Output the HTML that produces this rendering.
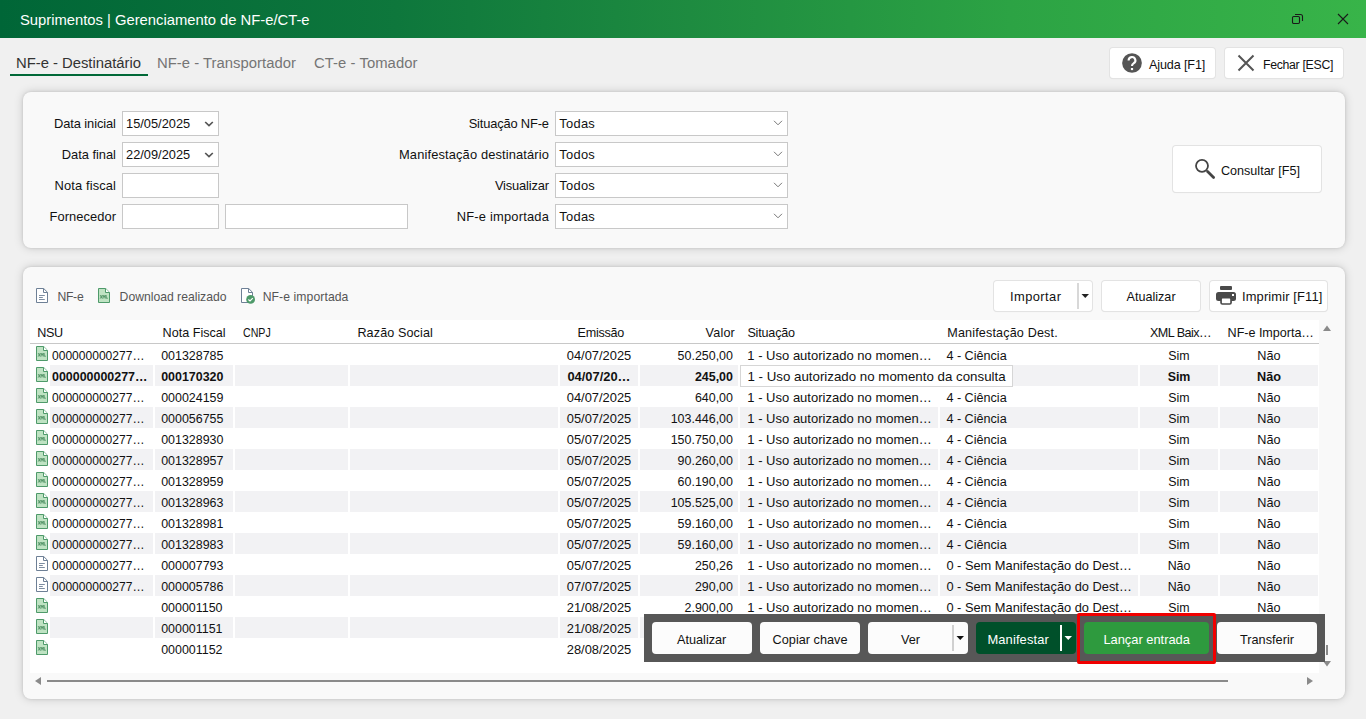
<!DOCTYPE html><html><head><meta charset="utf-8"><style>
*{margin:0;padding:0;box-sizing:border-box}
html,body{width:1366px;height:719px;overflow:hidden;background:#F0F0F0;font-family:"Liberation Sans",sans-serif;color:#111}
.a{position:absolute}
.t{position:absolute;white-space:nowrap;line-height:1}
.panel{position:absolute;background:#F9F9F9;border-radius:8px;box-shadow:0 0 10px rgba(0,0,0,0.17),0 0 3px rgba(0,0,0,0.12)}
.btn{position:absolute;background:#FFFFFF;border-radius:3px;box-shadow:0 0 0 1px #E3E3E3,0 1px 1px rgba(0,0,0,0.08)}
.inp{position:absolute;background:#FFF;border:1px solid #C8C8C8}
.c{position:absolute;height:21px;background:#F2F2F4}
.bb{position:absolute;background:#FCFCFC;border-radius:4px}
</style></head><body>
<div class="a" style="left:0;top:0;width:1366px;height:38px;background:linear-gradient(to right,#006637 0%,#0E773C 29%,#1E8B40 50.5%,#2CA344 74%,#38B449 100%)"></div>
<div class="t" style="left:20.00px;top:13px;font-size:14.8px;letter-spacing:-0.013px;color:#fff">Suprimentos | Gerenciamento de NF-e/CT-e</div>
<svg class="a" style="left:1290px;top:12px" width="16" height="16" viewBox="0 0 16 16"><rect x="2.5" y="4.5" width="7" height="7" rx="1.2" fill="none" stroke="#1a1a1a" stroke-width="1.1"/><path d="M5 2.5 H10.5 Q12.5 2.5 12.5 4.5 V9" fill="none" stroke="#1a1a1a" stroke-width="1.1"/></svg>
<svg class="a" style="left:1337px;top:13px" width="12" height="12" viewBox="0 0 12 12"><path d="M1 1 L11 11 M11 1 L1 11" stroke="#1a1a1a" stroke-width="1.1"/></svg>
<div class="t" style="left:16.00px;top:56px;font-size:14.85px;letter-spacing:-0.024px;color:#333333">NF-e - Destinatário</div>
<div class="a" style="left:10px;top:74px;width:138px;height:2px;background:#006837"></div>
<div class="t" style="left:157.00px;top:56px;font-size:14.85px;letter-spacing:0.018px;color:#757575">NF-e - Transportador</div>
<div class="t" style="left:314.00px;top:56px;font-size:14.85px;letter-spacing:0.047px;color:#757575">CT-e - Tomador</div>
<div class="btn" style="left:1110px;top:48px;width:105px;height:30px"></div>
<svg class="a" style="left:1122px;top:53px" width="20" height="20" viewBox="0 0 20 20"><circle cx="10" cy="10" r="9.85" fill="#555"/><path d="M6.6 7.4 A3.4 3.3 0 1 1 11.6 10.3 Q10 11.2 10 13" fill="none" stroke="#fff" stroke-width="2.1"/><rect x="8.9" y="15" width="2.2" height="2.1" fill="#fff"/></svg>
<div class="t" style="left:1149.00px;top:59px;font-size:12.6px;letter-spacing:-0.126px">Ajuda [F1]</div>
<div class="btn" style="left:1225px;top:48px;width:118px;height:30px"></div>
<svg class="a" style="left:1237px;top:54px" width="18" height="18" viewBox="0 0 18 18"><path d="M1.5 1.5 L16.5 16.5 M16.5 1.5 L1.5 16.5" stroke="#555" stroke-width="2"/></svg>
<div class="t" style="left:1263.00px;top:59px;font-size:12.3px;letter-spacing:-0.311px">Fechar [ESC]</div>
<div class="panel" style="left:23px;top:92px;width:1322px;height:156px"></div>
<div class="t" style="left:54.00px;top:118px;font-size:12.9px;letter-spacing:-0.100px">Data inicial</div>
<div class="t" style="left:468.70px;top:118px;font-size:12.9px;letter-spacing:-0.180px">Situação NF-e</div>
<div class="inp" style="left:122px;top:111px;width:97px;height:25px"></div>
<div class="inp" style="left:555px;top:111px;width:233px;height:25px"></div>
<div class="t" style="left:559.30px;top:118px;font-size:12.9px;letter-spacing:0.269px">Todas</div>
<svg class="a" style="left:773px;top:120px" width="10" height="6" viewBox="0 0 10 6"><path d="M1 0.8 L5 4.8 L9 0.8" fill="none" stroke="#777" stroke-width="1"/></svg>
<div class="t" style="left:61.80px;top:149px;font-size:12.9px;letter-spacing:-0.033px">Data final</div>
<div class="t" style="left:399.00px;top:149px;font-size:12.9px;letter-spacing:0.125px">Manifestação destinatário</div>
<div class="inp" style="left:122px;top:142px;width:97px;height:25px"></div>
<div class="inp" style="left:555px;top:142px;width:233px;height:25px"></div>
<div class="t" style="left:559.30px;top:149px;font-size:12.9px;letter-spacing:0.269px">Todos</div>
<svg class="a" style="left:773px;top:151px" width="10" height="6" viewBox="0 0 10 6"><path d="M1 0.8 L5 4.8 L9 0.8" fill="none" stroke="#777" stroke-width="1"/></svg>
<div class="t" style="left:54.50px;top:180px;font-size:12.9px;letter-spacing:0.128px">Nota fiscal</div>
<div class="t" style="left:494.90px;top:180px;font-size:12.9px;letter-spacing:-0.177px">Visualizar</div>
<div class="inp" style="left:122px;top:173px;width:97px;height:25px"></div>
<div class="inp" style="left:555px;top:173px;width:233px;height:25px"></div>
<div class="t" style="left:559.30px;top:180px;font-size:12.9px;letter-spacing:0.269px">Todos</div>
<svg class="a" style="left:773px;top:182px" width="10" height="6" viewBox="0 0 10 6"><path d="M1 0.8 L5 4.8 L9 0.8" fill="none" stroke="#777" stroke-width="1"/></svg>
<div class="t" style="left:49.50px;top:211px;font-size:12.9px;letter-spacing:0.059px">Fornecedor</div>
<div class="t" style="left:456.70px;top:211px;font-size:12.9px;letter-spacing:0.206px">NF-e importada</div>
<div class="inp" style="left:122px;top:204px;width:97px;height:25px"></div>
<div class="inp" style="left:555px;top:204px;width:233px;height:25px"></div>
<div class="t" style="left:559.30px;top:211px;font-size:12.9px;letter-spacing:0.269px">Todas</div>
<svg class="a" style="left:773px;top:213px" width="10" height="6" viewBox="0 0 10 6"><path d="M1 0.8 L5 4.8 L9 0.8" fill="none" stroke="#777" stroke-width="1"/></svg>
<div class="t" style="left:126.00px;top:118px;font-size:12.8px;letter-spacing:0.015px">15/05/2025</div>
<svg class="a" style="left:204px;top:121px" width="10" height="6" viewBox="0 0 10 6"><path d="M1.2 1 L5 4.6 L8.8 1" fill="none" stroke="#555" stroke-width="1.7"/></svg>
<div class="t" style="left:126.00px;top:149px;font-size:12.8px;letter-spacing:0.015px">22/09/2025</div>
<svg class="a" style="left:204px;top:152px" width="10" height="6" viewBox="0 0 10 6"><path d="M1.2 1 L5 4.6 L8.8 1" fill="none" stroke="#555" stroke-width="1.7"/></svg>
<div class="inp" style="left:225px;top:204px;width:183px;height:25px"></div>
<div class="btn" style="left:1173px;top:146px;width:148px;height:46px"></div>
<svg class="a" style="left:1193px;top:157px" width="24" height="24" viewBox="0 0 24 24"><circle cx="9" cy="8.8" r="6" fill="none" stroke="#444" stroke-width="1.8"/><path d="M14.6 14.6 L20.6 20.6" stroke="#444" stroke-width="2.8" stroke-linecap="round"/></svg>
<div class="t" style="left:1221.00px;top:165px;font-size:12.6px;letter-spacing:-0.010px">Consultar [F5]</div>
<div class="panel" style="left:23px;top:267px;width:1322px;height:432px"></div>
<svg class="a" style="left:36px;top:288px" width="12" height="15" viewBox="0 0 12 15"><path d="M0.5 0.5 H7.7 L11.5 4.3 V14.5 H0.5 Z" fill="#fff" stroke="#6E8096" stroke-width="1"/><path d="M7.5 0.5 V4.5 H11.5" fill="none" stroke="#6E8096" stroke-width="1"/><path d="M3 7.5 H8.8 M3 9.5 H6.8 M3 11.5 H8.8" stroke="#6E8096" stroke-width="0.9"/></svg>
<div class="t" style="left:57.40px;top:291px;font-size:12.2px;letter-spacing:-0.271px;color:#555">NF-e</div>
<svg class="a" style="left:98px;top:288px" width="12" height="15" viewBox="0 0 12 15"><path d="M0.5 0.5 H7.7 L11.5 4.3 V14.5 H0.5 Z" fill="#BFE3C3" stroke="#4E9A6A" stroke-width="1"/><path d="M7.5 0.5 V4.5 H11.5" fill="#fff" stroke="#4E9A6A" stroke-width="1"/><path d="M2.2 7.1 L4.2 10.6 M4.2 7.1 L2.2 10.6 M5 10.6 V7.1 L6.1 9.4 L7.2 7.1 V10.6 M8.2 7.1 V10.2 H9.9" fill="none" stroke="#4A8E60" stroke-width="0.85"/></svg>
<div class="t" style="left:119.60px;top:291px;font-size:12.2px;letter-spacing:-0.009px;color:#555">Download realizado</div>
<svg class="a" style="left:241px;top:288px" width="16" height="16" viewBox="0 0 16 16"><path d="M0.5 0.5 H7.7 L11.5 4.3 V14.5 H0.5 Z" fill="#fff" stroke="#6E8096" stroke-width="1"/><path d="M7.5 0.5 V4.5 H11.5" fill="none" stroke="#6E8096" stroke-width="1"/><circle cx="9.6" cy="11.4" r="4.4" fill="#4E9A6A"/><path d="M7.4 11.5 L9 12.9 L11.8 10.1" fill="none" stroke="#fff" stroke-width="1.2"/></svg>
<div class="t" style="left:262.70px;top:291px;font-size:12.2px;letter-spacing:0.080px;color:#555">NF-e importada</div>
<div class="btn" style="left:994px;top:281px;width:98px;height:30px"></div>
<div class="t" style="left:1010.00px;top:291px;font-size:12.9px;letter-spacing:0.424px">Importar</div>
<div class="a" style="left:1077px;top:283px;width:2px;height:26px;background:#D8D8D8"></div>
<svg class="a" style="left:1081px;top:293px" width="9" height="6" viewBox="0 0 9 6"><path d="M0.5 1 H8 L4.25 5 Z" fill="#222"/></svg>
<div class="btn" style="left:1102px;top:281px;width:98px;height:30px"></div>
<div class="t" style="left:1126.50px;top:291px;font-size:12.6px;letter-spacing:0.010px">Atualizar</div>
<div class="btn" style="left:1210px;top:281px;width:117px;height:30px"></div>
<svg class="a" style="left:1215px;top:285px" width="22" height="21" viewBox="0 0 22 21"><rect x="5" y="1" width="12" height="4" rx="1" fill="#4a4a4a"/><rect x="1" y="7" width="20" height="9" rx="2.5" fill="#4a4a4a"/><rect x="6.05" y="12.6" width="10" height="6.4" rx="1.3" fill="#fff" stroke="#4a4a4a" stroke-width="1.7"/><rect x="17" y="9" width="2" height="2" fill="#fff"/></svg>
<div class="t" style="left:1242.00px;top:291px;font-size:12.9px;letter-spacing:0.139px">Imprimir [F11]</div>
<div class="a" style="left:30px;top:320px;width:1289px;height:353px;background:#fff"></div>
<div class="a" style="left:30px;top:343px;width:1289px;height:1px;background:#C8C8C8"></div>
<div class="t" style="left:37.30px;top:327px;font-size:12.6px;letter-spacing:-0.402px">NSU</div>
<div class="t" style="left:162.60px;top:327px;font-size:12.6px;letter-spacing:-0.002px">Nota Fiscal</div>
<div class="t" style="left:242.90px;top:327px;font-size:12.6px;transform:scaleX(0.8449);transform-origin:0 0">CNPJ</div>
<div class="t" style="left:357.40px;top:327px;font-size:12.6px;letter-spacing:0.114px">Razão Social</div>
<div class="t" style="left:577.60px;top:327px;font-size:12.6px;letter-spacing:-0.253px">Emissão</div>
<div class="t" style="left:705.50px;top:327px;font-size:12.6px;letter-spacing:0.205px">Valor</div>
<div class="t" style="left:747.40px;top:327px;font-size:12.6px;letter-spacing:-0.191px">Situação</div>
<div class="t" style="left:947.30px;top:327px;font-size:12.6px;letter-spacing:0.150px">Manifestação Dest.</div>
<div class="t" style="left:1150.00px;top:327px;font-size:12.6px;letter-spacing:-0.544px">XML Baix…</div>
<div class="t" style="left:1227.60px;top:327px;font-size:12.6px;letter-spacing:-0.035px">NF-e Importa…</div>
<svg class="a" style="left:1322px;top:324px" width="10" height="8" viewBox="0 0 10 8"><path d="M1 7 H9 L5 1.5 Z" fill="#8a8a8a"/></svg>
<svg class="a" style="left:36px;top:346px" width="12" height="15" viewBox="0 0 12 15"><path d="M0.5 0.5 H7.7 L11.5 4.3 V14.5 H0.5 Z" fill="#BFE3C3" stroke="#4E9A6A" stroke-width="1"/><path d="M7.5 0.5 V4.5 H11.5" fill="#fff" stroke="#4E9A6A" stroke-width="1"/><path d="M2.2 7.1 L4.2 10.6 M4.2 7.1 L2.2 10.6 M5 10.6 V7.1 L6.1 9.4 L7.2 7.1 V10.6 M8.2 7.1 V10.2 H9.9" fill="none" stroke="#4A8E60" stroke-width="0.85"/></svg>
<div class="t" style="left:52.00px;top:350px;font-size:12.05px">000000000277…</div>
<div class="t" style="left:161.20px;top:350px;font-size:12.45px">001328785</div>
<div class="t" style="left:566.72px;top:350px;font-size:12.9px">04/07/2025</div>
<div class="t" style="left:677.61px;top:350px;font-size:12.45px">50.250,00</div>
<div class="t" style="left:747.30px;top:349px;font-size:13.0px;letter-spacing:0.009px">1 - Uso autorizado no momen…</div>
<div class="t" style="left:946.40px;top:350px;font-size:12.62px;letter-spacing:-0.002px">4 - Ciência</div>
<div class="t" style="left:1168.32px;top:350px;font-size:12.4px">Sim</div>
<div class="t" style="left:1257.35px;top:350px;font-size:12.7px">Não</div>
<div class="c" style="left:50px;top:365px;width:103px"></div>
<div class="c" style="left:155px;top:365px;width:78px"></div>
<div class="c" style="left:235px;top:365px;width:113px"></div>
<div class="c" style="left:350px;top:365px;width:208px"></div>
<div class="c" style="left:560px;top:365px;width:78px"></div>
<div class="c" style="left:640px;top:365px;width:98px"></div>
<div class="c" style="left:740px;top:365px;width:198px"></div>
<div class="c" style="left:940px;top:365px;width:198px"></div>
<div class="c" style="left:1140px;top:365px;width:78px"></div>
<div class="c" style="left:1220px;top:365px;width:98px"></div>
<svg class="a" style="left:36px;top:367px" width="12" height="15" viewBox="0 0 12 15"><path d="M0.5 0.5 H7.7 L11.5 4.3 V14.5 H0.5 Z" fill="#BFE3C3" stroke="#4E9A6A" stroke-width="1"/><path d="M7.5 0.5 V4.5 H11.5" fill="#fff" stroke="#4E9A6A" stroke-width="1"/><path d="M2.2 7.1 L4.2 10.6 M4.2 7.1 L2.2 10.6 M5 10.6 V7.1 L6.1 9.4 L7.2 7.1 V10.6 M8.2 7.1 V10.2 H9.9" fill="none" stroke="#4A8E60" stroke-width="0.85"/></svg>
<div class="t" style="left:52.00px;top:371px;font-size:12.45px;font-weight:bold">000000000277…</div>
<div class="t" style="left:161.20px;top:371px;font-size:12.45px;font-weight:bold">000170320</div>
<div class="t" style="left:567.44px;top:371px;font-size:12.9px;font-weight:bold">04/07/20…</div>
<div class="t" style="left:694.92px;top:371px;font-size:12.45px;font-weight:bold">245,00</div>
<div class="a" style="left:740px;top:365px;width:273px;height:22px;background:#fff;border:1px solid #D6D6D6"></div>
<div class="t" style="left:747.40px;top:370px;font-size:13.3px;letter-spacing:0.007px">1 - Uso autorizado no momento da consulta</div>
<div class="t" style="left:1167.63px;top:371px;font-size:12.4px;font-weight:bold">Sim</div>
<div class="t" style="left:1257.00px;top:371px;font-size:12.7px;font-weight:bold">Não</div>
<svg class="a" style="left:36px;top:388px" width="12" height="15" viewBox="0 0 12 15"><path d="M0.5 0.5 H7.7 L11.5 4.3 V14.5 H0.5 Z" fill="#BFE3C3" stroke="#4E9A6A" stroke-width="1"/><path d="M7.5 0.5 V4.5 H11.5" fill="#fff" stroke="#4E9A6A" stroke-width="1"/><path d="M2.2 7.1 L4.2 10.6 M4.2 7.1 L2.2 10.6 M5 10.6 V7.1 L6.1 9.4 L7.2 7.1 V10.6 M8.2 7.1 V10.2 H9.9" fill="none" stroke="#4A8E60" stroke-width="0.85"/></svg>
<div class="t" style="left:52.00px;top:392px;font-size:12.05px">000000000277…</div>
<div class="t" style="left:161.20px;top:392px;font-size:12.45px">000024159</div>
<div class="t" style="left:566.72px;top:392px;font-size:12.9px">04/07/2025</div>
<div class="t" style="left:694.92px;top:392px;font-size:12.45px">640,00</div>
<div class="t" style="left:747.30px;top:391px;font-size:13.0px;letter-spacing:0.009px">1 - Uso autorizado no momen…</div>
<div class="t" style="left:946.40px;top:392px;font-size:12.62px;letter-spacing:-0.002px">4 - Ciência</div>
<div class="t" style="left:1168.32px;top:392px;font-size:12.4px">Sim</div>
<div class="t" style="left:1257.35px;top:392px;font-size:12.7px">Não</div>
<div class="c" style="left:50px;top:407px;width:103px"></div>
<div class="c" style="left:155px;top:407px;width:78px"></div>
<div class="c" style="left:235px;top:407px;width:113px"></div>
<div class="c" style="left:350px;top:407px;width:208px"></div>
<div class="c" style="left:560px;top:407px;width:78px"></div>
<div class="c" style="left:640px;top:407px;width:98px"></div>
<div class="c" style="left:740px;top:407px;width:198px"></div>
<div class="c" style="left:940px;top:407px;width:198px"></div>
<div class="c" style="left:1140px;top:407px;width:78px"></div>
<div class="c" style="left:1220px;top:407px;width:98px"></div>
<svg class="a" style="left:36px;top:409px" width="12" height="15" viewBox="0 0 12 15"><path d="M0.5 0.5 H7.7 L11.5 4.3 V14.5 H0.5 Z" fill="#BFE3C3" stroke="#4E9A6A" stroke-width="1"/><path d="M7.5 0.5 V4.5 H11.5" fill="#fff" stroke="#4E9A6A" stroke-width="1"/><path d="M2.2 7.1 L4.2 10.6 M4.2 7.1 L2.2 10.6 M5 10.6 V7.1 L6.1 9.4 L7.2 7.1 V10.6 M8.2 7.1 V10.2 H9.9" fill="none" stroke="#4A8E60" stroke-width="0.85"/></svg>
<div class="t" style="left:52.00px;top:413px;font-size:12.05px">000000000277…</div>
<div class="t" style="left:161.20px;top:413px;font-size:12.45px">000056755</div>
<div class="t" style="left:566.72px;top:413px;font-size:12.9px">05/07/2025</div>
<div class="t" style="left:670.69px;top:413px;font-size:12.45px">103.446,00</div>
<div class="t" style="left:747.30px;top:412px;font-size:13.0px;letter-spacing:0.009px">1 - Uso autorizado no momen…</div>
<div class="t" style="left:946.40px;top:413px;font-size:12.62px;letter-spacing:-0.002px">4 - Ciência</div>
<div class="t" style="left:1168.32px;top:413px;font-size:12.4px">Sim</div>
<div class="t" style="left:1257.35px;top:413px;font-size:12.7px">Não</div>
<svg class="a" style="left:36px;top:430px" width="12" height="15" viewBox="0 0 12 15"><path d="M0.5 0.5 H7.7 L11.5 4.3 V14.5 H0.5 Z" fill="#BFE3C3" stroke="#4E9A6A" stroke-width="1"/><path d="M7.5 0.5 V4.5 H11.5" fill="#fff" stroke="#4E9A6A" stroke-width="1"/><path d="M2.2 7.1 L4.2 10.6 M4.2 7.1 L2.2 10.6 M5 10.6 V7.1 L6.1 9.4 L7.2 7.1 V10.6 M8.2 7.1 V10.2 H9.9" fill="none" stroke="#4A8E60" stroke-width="0.85"/></svg>
<div class="t" style="left:52.00px;top:434px;font-size:12.05px">000000000277…</div>
<div class="t" style="left:161.20px;top:434px;font-size:12.45px">001328930</div>
<div class="t" style="left:566.72px;top:434px;font-size:12.9px">05/07/2025</div>
<div class="t" style="left:670.69px;top:434px;font-size:12.45px">150.750,00</div>
<div class="t" style="left:747.30px;top:433px;font-size:13.0px;letter-spacing:0.009px">1 - Uso autorizado no momen…</div>
<div class="t" style="left:946.40px;top:434px;font-size:12.62px;letter-spacing:-0.002px">4 - Ciência</div>
<div class="t" style="left:1168.32px;top:434px;font-size:12.4px">Sim</div>
<div class="t" style="left:1257.35px;top:434px;font-size:12.7px">Não</div>
<div class="c" style="left:50px;top:449px;width:103px"></div>
<div class="c" style="left:155px;top:449px;width:78px"></div>
<div class="c" style="left:235px;top:449px;width:113px"></div>
<div class="c" style="left:350px;top:449px;width:208px"></div>
<div class="c" style="left:560px;top:449px;width:78px"></div>
<div class="c" style="left:640px;top:449px;width:98px"></div>
<div class="c" style="left:740px;top:449px;width:198px"></div>
<div class="c" style="left:940px;top:449px;width:198px"></div>
<div class="c" style="left:1140px;top:449px;width:78px"></div>
<div class="c" style="left:1220px;top:449px;width:98px"></div>
<svg class="a" style="left:36px;top:451px" width="12" height="15" viewBox="0 0 12 15"><path d="M0.5 0.5 H7.7 L11.5 4.3 V14.5 H0.5 Z" fill="#BFE3C3" stroke="#4E9A6A" stroke-width="1"/><path d="M7.5 0.5 V4.5 H11.5" fill="#fff" stroke="#4E9A6A" stroke-width="1"/><path d="M2.2 7.1 L4.2 10.6 M4.2 7.1 L2.2 10.6 M5 10.6 V7.1 L6.1 9.4 L7.2 7.1 V10.6 M8.2 7.1 V10.2 H9.9" fill="none" stroke="#4A8E60" stroke-width="0.85"/></svg>
<div class="t" style="left:52.00px;top:455px;font-size:12.05px">000000000277…</div>
<div class="t" style="left:161.20px;top:455px;font-size:12.45px">001328957</div>
<div class="t" style="left:566.72px;top:455px;font-size:12.9px">05/07/2025</div>
<div class="t" style="left:677.61px;top:455px;font-size:12.45px">90.260,00</div>
<div class="t" style="left:747.30px;top:454px;font-size:13.0px;letter-spacing:0.009px">1 - Uso autorizado no momen…</div>
<div class="t" style="left:946.40px;top:455px;font-size:12.62px;letter-spacing:-0.002px">4 - Ciência</div>
<div class="t" style="left:1168.32px;top:455px;font-size:12.4px">Sim</div>
<div class="t" style="left:1257.35px;top:455px;font-size:12.7px">Não</div>
<svg class="a" style="left:36px;top:472px" width="12" height="15" viewBox="0 0 12 15"><path d="M0.5 0.5 H7.7 L11.5 4.3 V14.5 H0.5 Z" fill="#BFE3C3" stroke="#4E9A6A" stroke-width="1"/><path d="M7.5 0.5 V4.5 H11.5" fill="#fff" stroke="#4E9A6A" stroke-width="1"/><path d="M2.2 7.1 L4.2 10.6 M4.2 7.1 L2.2 10.6 M5 10.6 V7.1 L6.1 9.4 L7.2 7.1 V10.6 M8.2 7.1 V10.2 H9.9" fill="none" stroke="#4A8E60" stroke-width="0.85"/></svg>
<div class="t" style="left:52.00px;top:476px;font-size:12.05px">000000000277…</div>
<div class="t" style="left:161.20px;top:476px;font-size:12.45px">001328959</div>
<div class="t" style="left:566.72px;top:476px;font-size:12.9px">05/07/2025</div>
<div class="t" style="left:677.61px;top:476px;font-size:12.45px">60.190,00</div>
<div class="t" style="left:747.30px;top:475px;font-size:13.0px;letter-spacing:0.009px">1 - Uso autorizado no momen…</div>
<div class="t" style="left:946.40px;top:476px;font-size:12.62px;letter-spacing:-0.002px">4 - Ciência</div>
<div class="t" style="left:1168.32px;top:476px;font-size:12.4px">Sim</div>
<div class="t" style="left:1257.35px;top:476px;font-size:12.7px">Não</div>
<div class="c" style="left:50px;top:491px;width:103px"></div>
<div class="c" style="left:155px;top:491px;width:78px"></div>
<div class="c" style="left:235px;top:491px;width:113px"></div>
<div class="c" style="left:350px;top:491px;width:208px"></div>
<div class="c" style="left:560px;top:491px;width:78px"></div>
<div class="c" style="left:640px;top:491px;width:98px"></div>
<div class="c" style="left:740px;top:491px;width:198px"></div>
<div class="c" style="left:940px;top:491px;width:198px"></div>
<div class="c" style="left:1140px;top:491px;width:78px"></div>
<div class="c" style="left:1220px;top:491px;width:98px"></div>
<svg class="a" style="left:36px;top:493px" width="12" height="15" viewBox="0 0 12 15"><path d="M0.5 0.5 H7.7 L11.5 4.3 V14.5 H0.5 Z" fill="#BFE3C3" stroke="#4E9A6A" stroke-width="1"/><path d="M7.5 0.5 V4.5 H11.5" fill="#fff" stroke="#4E9A6A" stroke-width="1"/><path d="M2.2 7.1 L4.2 10.6 M4.2 7.1 L2.2 10.6 M5 10.6 V7.1 L6.1 9.4 L7.2 7.1 V10.6 M8.2 7.1 V10.2 H9.9" fill="none" stroke="#4A8E60" stroke-width="0.85"/></svg>
<div class="t" style="left:52.00px;top:497px;font-size:12.05px">000000000277…</div>
<div class="t" style="left:161.20px;top:497px;font-size:12.45px">001328963</div>
<div class="t" style="left:566.72px;top:497px;font-size:12.9px">05/07/2025</div>
<div class="t" style="left:670.69px;top:497px;font-size:12.45px">105.525,00</div>
<div class="t" style="left:747.30px;top:496px;font-size:13.0px;letter-spacing:0.009px">1 - Uso autorizado no momen…</div>
<div class="t" style="left:946.40px;top:497px;font-size:12.62px;letter-spacing:-0.002px">4 - Ciência</div>
<div class="t" style="left:1168.32px;top:497px;font-size:12.4px">Sim</div>
<div class="t" style="left:1257.35px;top:497px;font-size:12.7px">Não</div>
<svg class="a" style="left:36px;top:514px" width="12" height="15" viewBox="0 0 12 15"><path d="M0.5 0.5 H7.7 L11.5 4.3 V14.5 H0.5 Z" fill="#BFE3C3" stroke="#4E9A6A" stroke-width="1"/><path d="M7.5 0.5 V4.5 H11.5" fill="#fff" stroke="#4E9A6A" stroke-width="1"/><path d="M2.2 7.1 L4.2 10.6 M4.2 7.1 L2.2 10.6 M5 10.6 V7.1 L6.1 9.4 L7.2 7.1 V10.6 M8.2 7.1 V10.2 H9.9" fill="none" stroke="#4A8E60" stroke-width="0.85"/></svg>
<div class="t" style="left:52.00px;top:518px;font-size:12.05px">000000000277…</div>
<div class="t" style="left:161.20px;top:518px;font-size:12.45px">001328981</div>
<div class="t" style="left:566.72px;top:518px;font-size:12.9px">05/07/2025</div>
<div class="t" style="left:677.61px;top:518px;font-size:12.45px">59.160,00</div>
<div class="t" style="left:747.30px;top:517px;font-size:13.0px;letter-spacing:0.009px">1 - Uso autorizado no momen…</div>
<div class="t" style="left:946.40px;top:518px;font-size:12.62px;letter-spacing:-0.002px">4 - Ciência</div>
<div class="t" style="left:1168.32px;top:518px;font-size:12.4px">Sim</div>
<div class="t" style="left:1257.35px;top:518px;font-size:12.7px">Não</div>
<div class="c" style="left:50px;top:533px;width:103px"></div>
<div class="c" style="left:155px;top:533px;width:78px"></div>
<div class="c" style="left:235px;top:533px;width:113px"></div>
<div class="c" style="left:350px;top:533px;width:208px"></div>
<div class="c" style="left:560px;top:533px;width:78px"></div>
<div class="c" style="left:640px;top:533px;width:98px"></div>
<div class="c" style="left:740px;top:533px;width:198px"></div>
<div class="c" style="left:940px;top:533px;width:198px"></div>
<div class="c" style="left:1140px;top:533px;width:78px"></div>
<div class="c" style="left:1220px;top:533px;width:98px"></div>
<svg class="a" style="left:36px;top:535px" width="12" height="15" viewBox="0 0 12 15"><path d="M0.5 0.5 H7.7 L11.5 4.3 V14.5 H0.5 Z" fill="#BFE3C3" stroke="#4E9A6A" stroke-width="1"/><path d="M7.5 0.5 V4.5 H11.5" fill="#fff" stroke="#4E9A6A" stroke-width="1"/><path d="M2.2 7.1 L4.2 10.6 M4.2 7.1 L2.2 10.6 M5 10.6 V7.1 L6.1 9.4 L7.2 7.1 V10.6 M8.2 7.1 V10.2 H9.9" fill="none" stroke="#4A8E60" stroke-width="0.85"/></svg>
<div class="t" style="left:52.00px;top:539px;font-size:12.05px">000000000277…</div>
<div class="t" style="left:161.20px;top:539px;font-size:12.45px">001328983</div>
<div class="t" style="left:566.72px;top:539px;font-size:12.9px">05/07/2025</div>
<div class="t" style="left:677.61px;top:539px;font-size:12.45px">59.160,00</div>
<div class="t" style="left:747.30px;top:538px;font-size:13.0px;letter-spacing:0.009px">1 - Uso autorizado no momen…</div>
<div class="t" style="left:946.40px;top:539px;font-size:12.62px;letter-spacing:-0.002px">4 - Ciência</div>
<div class="t" style="left:1168.32px;top:539px;font-size:12.4px">Sim</div>
<div class="t" style="left:1257.35px;top:539px;font-size:12.7px">Não</div>
<svg class="a" style="left:36px;top:556px" width="12" height="15" viewBox="0 0 12 15"><path d="M0.5 0.5 H7.7 L11.5 4.3 V14.5 H0.5 Z" fill="#fff" stroke="#6E8096" stroke-width="1"/><path d="M7.5 0.5 V4.5 H11.5" fill="none" stroke="#6E8096" stroke-width="1"/><path d="M3 7.5 H8.8 M3 9.5 H6.8 M3 11.5 H8.8" stroke="#6E8096" stroke-width="0.9"/></svg>
<div class="t" style="left:52.00px;top:560px;font-size:12.05px">000000000277…</div>
<div class="t" style="left:161.20px;top:560px;font-size:12.45px">000007793</div>
<div class="t" style="left:566.72px;top:560px;font-size:12.9px">05/07/2025</div>
<div class="t" style="left:694.92px;top:560px;font-size:12.45px">250,26</div>
<div class="t" style="left:747.30px;top:559px;font-size:13.0px;letter-spacing:0.009px">1 - Uso autorizado no momen…</div>
<div class="t" style="left:946.40px;top:560px;font-size:12.83px;letter-spacing:-0.000px">0 - Sem Manifestação do Dest…</div>
<div class="t" style="left:1167.63px;top:560px;font-size:12.4px">Não</div>
<div class="t" style="left:1257.35px;top:560px;font-size:12.7px">Não</div>
<div class="c" style="left:50px;top:575px;width:103px"></div>
<div class="c" style="left:155px;top:575px;width:78px"></div>
<div class="c" style="left:235px;top:575px;width:113px"></div>
<div class="c" style="left:350px;top:575px;width:208px"></div>
<div class="c" style="left:560px;top:575px;width:78px"></div>
<div class="c" style="left:640px;top:575px;width:98px"></div>
<div class="c" style="left:740px;top:575px;width:198px"></div>
<div class="c" style="left:940px;top:575px;width:198px"></div>
<div class="c" style="left:1140px;top:575px;width:78px"></div>
<div class="c" style="left:1220px;top:575px;width:98px"></div>
<svg class="a" style="left:36px;top:577px" width="12" height="15" viewBox="0 0 12 15"><path d="M0.5 0.5 H7.7 L11.5 4.3 V14.5 H0.5 Z" fill="#fff" stroke="#6E8096" stroke-width="1"/><path d="M7.5 0.5 V4.5 H11.5" fill="none" stroke="#6E8096" stroke-width="1"/><path d="M3 7.5 H8.8 M3 9.5 H6.8 M3 11.5 H8.8" stroke="#6E8096" stroke-width="0.9"/></svg>
<div class="t" style="left:52.00px;top:581px;font-size:12.05px">000000000277…</div>
<div class="t" style="left:161.20px;top:581px;font-size:12.45px">000005786</div>
<div class="t" style="left:566.72px;top:581px;font-size:12.9px">07/07/2025</div>
<div class="t" style="left:694.92px;top:581px;font-size:12.45px">290,00</div>
<div class="t" style="left:747.30px;top:580px;font-size:13.0px;letter-spacing:0.009px">1 - Uso autorizado no momen…</div>
<div class="t" style="left:946.40px;top:581px;font-size:12.83px;letter-spacing:-0.000px">0 - Sem Manifestação do Dest…</div>
<div class="t" style="left:1167.63px;top:581px;font-size:12.4px">Não</div>
<div class="t" style="left:1257.35px;top:581px;font-size:12.7px">Não</div>
<svg class="a" style="left:36px;top:598px" width="12" height="15" viewBox="0 0 12 15"><path d="M0.5 0.5 H7.7 L11.5 4.3 V14.5 H0.5 Z" fill="#BFE3C3" stroke="#4E9A6A" stroke-width="1"/><path d="M7.5 0.5 V4.5 H11.5" fill="#fff" stroke="#4E9A6A" stroke-width="1"/><path d="M2.2 7.1 L4.2 10.6 M4.2 7.1 L2.2 10.6 M5 10.6 V7.1 L6.1 9.4 L7.2 7.1 V10.6 M8.2 7.1 V10.2 H9.9" fill="none" stroke="#4A8E60" stroke-width="0.85"/></svg>
<div class="t" style="left:161.20px;top:602px;font-size:12.45px">000001150</div>
<div class="t" style="left:566.72px;top:602px;font-size:12.9px">21/08/2025</div>
<div class="t" style="left:684.54px;top:602px;font-size:12.45px">2.900,00</div>
<div class="t" style="left:747.30px;top:601px;font-size:13.0px;letter-spacing:0.009px">1 - Uso autorizado no momen…</div>
<div class="t" style="left:946.40px;top:602px;font-size:12.83px;letter-spacing:-0.000px">0 - Sem Manifestação do Dest…</div>
<div class="t" style="left:1168.32px;top:602px;font-size:12.4px">Sim</div>
<div class="t" style="left:1257.35px;top:602px;font-size:12.7px">Não</div>
<div class="c" style="left:50px;top:617px;width:103px"></div>
<div class="c" style="left:155px;top:617px;width:78px"></div>
<div class="c" style="left:235px;top:617px;width:113px"></div>
<div class="c" style="left:350px;top:617px;width:208px"></div>
<div class="c" style="left:560px;top:617px;width:78px"></div>
<div class="c" style="left:640px;top:617px;width:98px"></div>
<div class="c" style="left:740px;top:617px;width:198px"></div>
<div class="c" style="left:940px;top:617px;width:198px"></div>
<div class="c" style="left:1140px;top:617px;width:78px"></div>
<div class="c" style="left:1220px;top:617px;width:98px"></div>
<svg class="a" style="left:36px;top:619px" width="12" height="15" viewBox="0 0 12 15"><path d="M0.5 0.5 H7.7 L11.5 4.3 V14.5 H0.5 Z" fill="#BFE3C3" stroke="#4E9A6A" stroke-width="1"/><path d="M7.5 0.5 V4.5 H11.5" fill="#fff" stroke="#4E9A6A" stroke-width="1"/><path d="M2.2 7.1 L4.2 10.6 M4.2 7.1 L2.2 10.6 M5 10.6 V7.1 L6.1 9.4 L7.2 7.1 V10.6 M8.2 7.1 V10.2 H9.9" fill="none" stroke="#4A8E60" stroke-width="0.85"/></svg>
<div class="t" style="left:161.20px;top:623px;font-size:12.45px">000001151</div>
<div class="t" style="left:566.72px;top:623px;font-size:12.9px">21/08/2025</div>
<div class="t" style="left:747.30px;top:622px;font-size:13.0px;letter-spacing:0.009px">1 - Uso autorizado no momen…</div>
<div class="t" style="left:946.40px;top:623px;font-size:12.83px;letter-spacing:-0.000px">0 - Sem Manifestação do Dest…</div>
<div class="t" style="left:1168.32px;top:623px;font-size:12.4px">Sim</div>
<div class="t" style="left:1257.35px;top:623px;font-size:12.7px">Não</div>
<svg class="a" style="left:36px;top:640px" width="12" height="15" viewBox="0 0 12 15"><path d="M0.5 0.5 H7.7 L11.5 4.3 V14.5 H0.5 Z" fill="#BFE3C3" stroke="#4E9A6A" stroke-width="1"/><path d="M7.5 0.5 V4.5 H11.5" fill="#fff" stroke="#4E9A6A" stroke-width="1"/><path d="M2.2 7.1 L4.2 10.6 M4.2 7.1 L2.2 10.6 M5 10.6 V7.1 L6.1 9.4 L7.2 7.1 V10.6 M8.2 7.1 V10.2 H9.9" fill="none" stroke="#4A8E60" stroke-width="0.85"/></svg>
<div class="t" style="left:161.20px;top:644px;font-size:12.45px">000001152</div>
<div class="t" style="left:566.72px;top:644px;font-size:12.9px">28/08/2025</div>
<div class="t" style="left:747.30px;top:643px;font-size:13.0px;letter-spacing:0.009px">1 - Uso autorizado no momen…</div>
<div class="t" style="left:946.40px;top:644px;font-size:12.83px;letter-spacing:-0.000px">0 - Sem Manifestação do Dest…</div>
<div class="t" style="left:1168.32px;top:644px;font-size:12.4px">Sim</div>
<div class="t" style="left:1257.35px;top:644px;font-size:12.7px">Não</div>
<svg class="a" style="left:34px;top:676px" width="8" height="10" viewBox="0 0 8 10"><path d="M7 1 V9 L1 5 Z" fill="#8a8a8a"/></svg>
<div class="a" style="left:47px;top:680px;width:1181px;height:2px;background:#8a8a8a"></div>
<svg class="a" style="left:1306px;top:676px" width="8" height="10" viewBox="0 0 8 10"><path d="M1 1 V9 L7 5 Z" fill="#8a8a8a"/></svg>
<div class="a" style="left:1326px;top:645px;width:2px;height:10px;background:#8a8a8a"></div>
<svg class="a" style="left:1322px;top:660px" width="10" height="8" viewBox="0 0 10 8"><path d="M1 1 H9 L5 6.5 Z" fill="#8a8a8a"/></svg>
<div class="a" style="left:644px;top:614px;width:681px;height:48px;background:#575757"></div>
<div class="bb" style="left:652px;top:622px;width:100px;height:32px"></div>
<div class="t" style="left:677.00px;top:634px;font-size:12.7px;letter-spacing:-0.002px">Atualizar</div>
<div class="bb" style="left:760px;top:622px;width:100px;height:32px"></div>
<div class="t" style="left:772.60px;top:634px;font-size:12.7px;letter-spacing:0.015px">Copiar chave</div>
<div class="bb" style="left:868px;top:622px;width:100px;height:32px"></div>
<div class="t" style="left:901.00px;top:634px;font-size:12.7px;letter-spacing:-0.032px">Ver</div>
<div class="a" style="left:952px;top:625px;width:2px;height:26px;background:#D0D0D0"></div>
<svg class="a" style="left:956px;top:635px" width="9" height="6" viewBox="0 0 9 6"><path d="M0.5 1 H8 L4.25 5 Z" fill="#111"/></svg>
<div class="a" style="left:976px;top:622px;width:100px;height:32px;background:#00502A;border-radius:4px"></div>
<div class="t" style="left:987.40px;top:634px;font-size:12.9px;letter-spacing:0.142px;color:#fff">Manifestar</div>
<div class="a" style="left:1060px;top:625px;width:2px;height:26px;background:#fff"></div>
<svg class="a" style="left:1064px;top:635px" width="9" height="6" viewBox="0 0 9 6"><path d="M0.5 1 H8 L4.25 5 Z" fill="#fff"/></svg>
<div class="a" style="left:1077px;top:613px;width:139px;height:51px;border:3px solid #F00000;border-radius:2px"></div>
<div class="a" style="left:1084px;top:622px;width:125px;height:32px;background:#2E9A3E;border-radius:4px"></div>
<div class="t" style="left:1103.40px;top:634px;font-size:12.9px;letter-spacing:-0.014px;color:#fff">Lançar entrada</div>
<div class="bb" style="left:1217px;top:622px;width:100px;height:32px"></div>
<div class="t" style="left:1240.00px;top:634px;font-size:12.7px;letter-spacing:0.015px">Transferir</div>
</body></html>
